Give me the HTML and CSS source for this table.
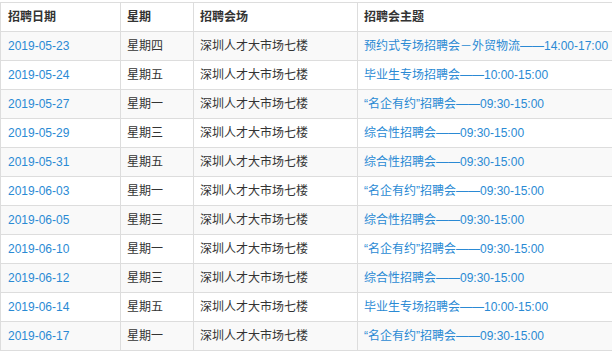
FILE: index.html
```html
<!DOCTYPE html>
<html lang="zh-CN">
<head>
<meta charset="utf-8">
<title>招聘会安排</title>
<link rel="stylesheet" href="styles.css">
</head>
<body>
<table class="fair-table">
  <colgroup>
    <col class="c-date"><col class="c-week"><col class="c-place"><col class="c-theme">
  </colgroup>
  <thead>
    <tr><th>招聘日期</th><th>星期</th><th>招聘会场</th><th>招聘会主题</th></tr>
  </thead>
  <tbody>
    <tr><td><a href="#">2019-05-23</a></td><td>星期四</td><td>深圳人才大市场七楼</td><td><a href="#">预约式专场招聘会－外贸物流——14:00-17:00</a></td></tr>
    <tr><td><a href="#">2019-05-24</a></td><td>星期五</td><td>深圳人才大市场七楼</td><td><a href="#">毕业生专场招聘会——10:00-15:00</a></td></tr>
    <tr><td><a href="#">2019-05-27</a></td><td>星期一</td><td>深圳人才大市场七楼</td><td><a href="#">“名企有约”招聘会——09:30-15:00</a></td></tr>
    <tr><td><a href="#">2019-05-29</a></td><td>星期三</td><td>深圳人才大市场七楼</td><td><a href="#">综合性招聘会——09:30-15:00</a></td></tr>
    <tr><td><a href="#">2019-05-31</a></td><td>星期五</td><td>深圳人才大市场七楼</td><td><a href="#">综合性招聘会——09:30-15:00</a></td></tr>
    <tr><td><a href="#">2019-06-03</a></td><td>星期一</td><td>深圳人才大市场七楼</td><td><a href="#">“名企有约”招聘会——09:30-15:00</a></td></tr>
    <tr><td><a href="#">2019-06-05</a></td><td>星期三</td><td>深圳人才大市场七楼</td><td><a href="#">综合性招聘会——09:30-15:00</a></td></tr>
    <tr><td><a href="#">2019-06-10</a></td><td>星期一</td><td>深圳人才大市场七楼</td><td><a href="#">“名企有约”招聘会——09:30-15:00</a></td></tr>
    <tr><td><a href="#">2019-06-12</a></td><td>星期三</td><td>深圳人才大市场七楼</td><td><a href="#">综合性招聘会——09:30-15:00</a></td></tr>
    <tr><td><a href="#">2019-06-14</a></td><td>星期五</td><td>深圳人才大市场七楼</td><td><a href="#">毕业生专场招聘会——10:00-15:00</a></td></tr>
    <tr><td><a href="#">2019-06-17</a></td><td>星期一</td><td>深圳人才大市场七楼</td><td><a href="#">“名企有约”招聘会——09:30-15:00</a></td></tr>
  </tbody>
</table>
</body>
</html>
```
FILE: styles.css
```css
html, body {
  margin: 0;
  padding: 0;
  background: #fff;
  overflow: hidden;
}
body {
  padding-top: 2px;
  font-family: "Liberation Sans", "Noto Sans CJK SC", sans-serif;
  font-size: 12px;
  color: #333;
}
.fair-table {
  border-collapse: collapse;
  table-layout: fixed;
  width: 640px;
}
.c-date { width: 120px; }
.c-week { width: 73px; }
.c-place { width: 164px; }
.c-theme { width: 283px; }
.fair-table th,
.fair-table td {
  border: 1px solid #ddd;
  padding: 4px 6px;
  line-height: 20px;
  text-align: left;
  white-space: nowrap;
  vertical-align: middle;
}
.fair-table th:first-child,
.fair-table td:first-child {
  padding-left: 7px;
}
.fair-table th {
  font-weight: bold;
  color: #333;
}
.fair-table tbody tr:nth-child(odd) td {
  background: #f9f9f9;
}
.fair-table a {
  color: #2a8ad4;
  text-decoration: none;
}
```
